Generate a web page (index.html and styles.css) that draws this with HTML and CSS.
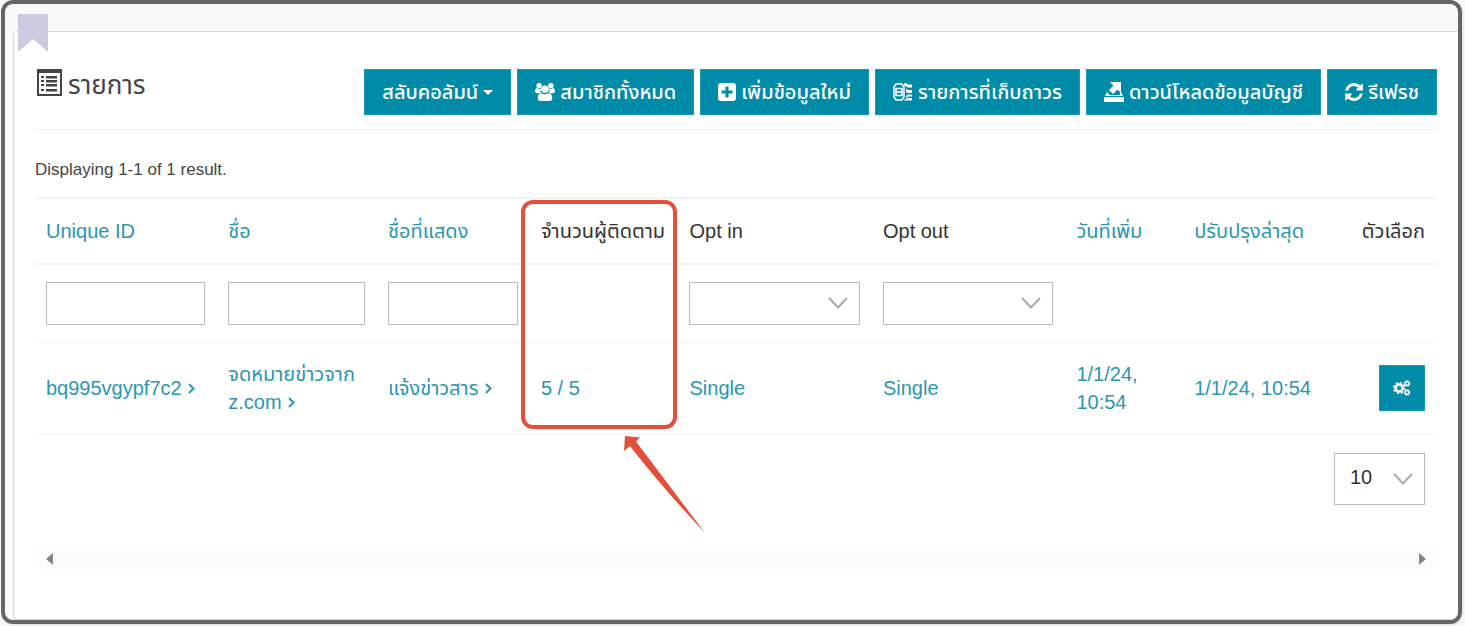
FILE: index.html
```
<!DOCTYPE html>
<html lang="th">
<head>
<meta charset="utf-8">
<title>รายการ</title>
<link rel="stylesheet" href="styles.css">
</head>
<body>
<main class="frame">
  <section class="panel">
    <svg class="bookmark" viewBox="0 0 30 38" aria-hidden="true"><path d="M0 0h30v38L15 25 0 38z"/></svg>
    <header class="panel-header">
      <h1 class="title">
        <svg class="title-icon" viewBox="0 0 25 27" aria-hidden="true"><path fill-rule="evenodd" d="M0 0h25v27H0zM2 4v21h21V4z"/><path d="M4 7h3v2H4zM9 7h11v2.500H9zM4 11h3v2H4zM9 11h11v2.500H9zM4 15h3v2H4zM9 15h11v2.500H9zM4 20h3v2H4zM9 20h11v2.500H9z"/></svg>
        <span>รายการ</span>
      </h1>
      <div class="actions">
        <button class="btn" type="button"><span>สลับคอลัมน์</span><svg class="caret" viewBox="0 0 10 5" aria-hidden="true"><path d="M0 0h10L5 5z"/></svg></button>
        <button class="btn" type="button"><svg class="icon icon-wide" viewBox="0 0 22 20" aria-hidden="true"><circle cx="4.500" cy="3" r="3"/><circle cx="17.500" cy="3" r="3"/><path d="M0 9q0-3 2-3.500 3 2 5 .5-2 3-.5 5.500H2Q0 11.500 0 9zM22 9q0-3-2-3.500-3 2-5 .5 2 3 .5 5.500H20q2 0 2-2.500z"/><circle cx="11" cy="7" r="4.200"/><path d="M6.500 11q4.500 3 9 0 3.500 1 3.500 6 0 3-3 3H6q-3 0-3-3 0-5 3.500-6z"/></svg><span>สมาชิกทั้งหมด</span></button>
        <button class="btn" type="button"><svg class="icon" viewBox="0 0 18 18" aria-hidden="true"><path fill-rule="evenodd" d="M3 0h12q3 0 3 3v12q0 3-3 3H3q-3 0-3-3V3q0-3 3-3zM7.500 3.500v4h-4v3h4v4h3v-4h4v-3h-4v-4z"/></svg><span>เพิ่มข้อมูลใหม่</span></button>
        <button class="btn" type="button"><svg class="icon icon-wide" viewBox="0 0 20 20" aria-hidden="true"><path d="M1 5l2-3h6l2 3v10l-2 3H3l-2-3zM3 6.500h6v7H3zM3 10h6" fill="none" stroke="currentColor" stroke-width="1.500"/><path d="M11 1h2l2 1.500h4v3h-4l-4-2zM13 6.500l2 1.500h4v3h-5l-1-1zM13 14l2-1.500h4v2h-4l-2 2zM11 18l4-2h4v2.500h-8z"/></svg><span>รายการที่เก็บถาวร</span></button>
        <button class="btn" type="button"><svg class="icon icon-wide" viewBox="0 0 20 20" aria-hidden="true"><path d="M6 0h11v11l-3.500-3.500L9 12 5 8l4.500-4.500zM3 10l3 3h10v-2l1-1 2 4H1zM0 15h20v5H0z"/></svg><span>ดาวน์โหลดข้อมูลบัญชี</span></button>
        <button class="btn" type="button"><svg class="icon" viewBox="0 128 1536 1536" aria-hidden="true"><path d="M1511 1056q0 5-1 7-64 268-268 434.500t-478 166.500q-146 0-282.500-55t-243.500-157l-129 129q-19 19-45 19t-45-19-19-45v-448q0-26 19-45t45-19h448q26 0 45 19t19 45-19 45l-137 137q71 66 161 102t187 36q134 0 250-65t186-179q11-17 53-117 8-23 30-23h192q13 0 22.500 9.500t9.500 22.500zm25-800v448q0 26-19 45t-45 19h-448q-26 0-45-19t-19-45 19-45l138-138q-148-137-349-137-134 0-250 65t-186 179q-11 17-53 117-8 23-30 23h-199q-13 0-22.500-9.500t-9.500-22.500v-7q65-268 270-434.500t480-166.500q146 0 284 55.500t245 156.500l130-129q19-19 45-19t45 19 19 45z"/></svg><span>รีเฟรช</span></button>
      </div>
    </header>
    <p class="summary">Displaying 1-1 of 1 result.</p>
    <table class="grid">
      <colgroup><col class="c-id"><col class="c-name"><col class="c-display"><col class="c-count"><col class="c-opt"><col class="c-opt"><col class="c-added"><col class="c-updated"><col class="c-options"></colgroup>
      <thead>
        <tr class="headings">
          <th><a href="#">Unique ID</a></th>
          <th><a href="#">ชื่อ</a></th>
          <th><a href="#">ชื่อที่แสดง</a></th>
          <th class="marked">จำนวนผู้ติดตาม
            <span class="highlight"></span>
            <svg class="arrow" viewBox="0 0 81 97" aria-hidden="true"><path d="M1 0 16 1.500 12 5.500 81 97Q36 49 6 10L0 15z"/></svg>
          </th>
          <th>Opt in</th>
          <th>Opt out</th>
          <th><a href="#">วันที่เพิ่ม</a></th>
          <th><a href="#">ปรับปรุงล่าสุด</a></th>
          <th class="end">ตัวเลือก</th>
        </tr>
        <tr class="filters">
          <td><input class="field" type="text" aria-label="Unique ID"></td>
          <td><input class="field" type="text" aria-label="ชื่อ"></td>
          <td><input class="field" type="text" aria-label="ชื่อที่แสดง"></td>
          <td></td>
          <td><span class="select"><select class="field" aria-label="Opt in"><option></option><option>Single</option></select><svg class="chevron" viewBox="0 0 20 12" aria-hidden="true"><path d="M1 1l9 9.500L19 1"/></svg></span></td>
          <td><span class="select"><select class="field" aria-label="Opt out"><option></option><option>Single</option></select><svg class="chevron" viewBox="0 0 20 12" aria-hidden="true"><path d="M1 1l9 9.500L19 1"/></svg></span></td>
          <td></td><td></td><td></td>
        </tr>
      </thead>
      <tbody>
        <tr class="row">
          <td><a href="#">bq995vgypf7c2 <svg class="more" viewBox="0 0 8 12" aria-hidden="true"><path d="M2 1l4.500 4.500L2 10"/></svg></a></td>
          <td><a href="#">จดหมายข่าวจาก z.com <svg class="more" viewBox="0 0 8 12" aria-hidden="true"><path d="M2 1l4.500 4.500L2 10"/></svg></a></td>
          <td><a href="#">แจ้งข่าวสาร <svg class="more" viewBox="0 0 8 12" aria-hidden="true"><path d="M2 1l4.500 4.500L2 10"/></svg></a></td>
          <td>5 / 5</td>
          <td>Single</td>
          <td>Single</td>
          <td>1/1/24, 10:54</td>
          <td>1/1/24, 10:54</td>
          <td class="end"><button class="btn btn-square" type="button" aria-label="ตัวเลือก"><svg class="icon" viewBox="0 0 19 17" aria-hidden="true"><g fill="none" stroke="currentColor"><circle cx="6.500" cy="8.500" r="3.700" stroke-width="2.800"/><circle cx="6.500" cy="8.500" r="5.700" stroke-width="1.600" stroke-dasharray="2.200 2.280"/><circle cx="14.800" cy="3.800" r="2" stroke-width="1.700"/><circle cx="14.800" cy="3.800" r="3.200" stroke-width="1" stroke-dasharray="1.200 1.310"/><circle cx="14.800" cy="13.200" r="2" stroke-width="1.700"/><circle cx="14.800" cy="13.200" r="3.200" stroke-width="1" stroke-dasharray="1.200 1.310"/></g></svg></button></td>
        </tr>
      </tbody>
    </table>
    <div class="pager"><span class="select"><select class="field field-tall" aria-label="Page size"><option>10</option><option>20</option></select><svg class="chevron" viewBox="0 0 20 12" aria-hidden="true"><path d="M1 1l9 9.500L19 1"/></svg></span></div>
    <div class="scrollbar" aria-hidden="true">
      <svg class="tri" viewBox="0 0 7 12"><path d="M7 0v12L0 6z"/></svg>
      <svg class="tri" viewBox="0 0 7 12"><path d="M0 0v12l7-6z"/></svg>
    </div>
  </section>
</main>
</body>
</html>
```
FILE: styles.css
```
* { box-sizing: border-box; }
body {
  margin: 0;
  background: #fafafa;
  color: #333;
  font: 20px/28px "Liberation Sans", Arial, "Noto Sans Thai", "Noto Sans", sans-serif;
}
a { color: inherit; text-decoration: none; }
svg { fill: currentColor; }
.frame {
  display: flex;
  min-height: calc(100vh - 2px);
  margin: 0 3px 2px 1px;
  padding: 27px 0 0 8px;
  border: 4px solid #666;
  border-radius: 12px;
  background: #fafafa;
  box-shadow: 1px 1px 2px #ddd;
}
.panel {
  position: relative;
  flex: 1;
  padding: 37px 21px 48px;
  border: 1px solid #d3d7df;
  border-right: 0;
  border-radius: 4px 0 8px 4px;
  background: #fff;
}
.bookmark { position: absolute; top: -18px; left: 4px; width: 30px; height: 38px; color: #cccce0; }
.panel-header {
  display: flex;
  justify-content: space-between;
  padding-bottom: 14px;
  border-bottom: 1px solid #eee;
}
.title { display: flex; gap: 6px; margin: 0; color: #444; font-size: 26px; font-weight: 400; line-height: 32px; }
.title-icon { width: 25px; height: 27px; margin-left: 2px; }
.actions { display: flex; gap: 6px; }
.btn {
  display: flex;
  align-items: center;
  justify-content: center;
  gap: 5px;
  height: 46px;
  padding: 0 17px;
  border: 1px solid #1c98b3;
  background: #008ba8;
  color: #fff;
  font: inherit;
  font-weight: 500;
  white-space: nowrap;
}
.icon { width: 18px; height: 18px; }
.icon-wide { width: 20px; height: 20px; }
.caret { width: 10px; height: 5px; }
.btn-square { width: 46px; margin-left: auto; padding: 0; }
.summary { margin: 26px 0 13px; color: #444; font-size: 17px; }
.grid { width: 100%; border-collapse: collapse; table-layout: fixed; }
.c-id { width: 13%; }
.c-name { width: 11.400%; }
.c-display { width: 10.900%; }
.c-count { width: 10.600%; }
.c-opt { width: 13.800%; }
.c-added { width: 8.400%; }
.c-updated { width: 10.100%; }
.c-options { width: 8%; }
th, td { padding: 0 12px 0 11px; text-align: left; vertical-align: middle; font-weight: 400; }
.headings { height: 66px; border: solid #f3f3f3; border-width: 2px 0; white-space: nowrap; }
.headings a, .row { color: #2a97b1; }
.filters { height: 78px; }
.row { height: 92px; border: solid #f3f3f3; border-width: 1px 0; }
.end { text-align: right; }
.marked { position: relative; }
.highlight {
  position: absolute;
  top: 1px;
  right: 1px;
  left: -9px;
  height: 229px;
  border: 4px solid #e44f3c;
  border-radius: 12px;
}
.arrow { position: absolute; top: 237px; left: 94px; width: 81px; height: 97px; color: #e44f3c; }
.field {
  display: block;
  width: 100%;
  height: 43px;
  padding: 0 15px;
  border: 1px solid #bbb;
  border-radius: 0;
  background: #fff;
  color: #333;
  font: inherit;
  appearance: none;
}
.select { position: relative; display: block; }
.chevron {
  position: absolute;
  top: 50%;
  right: 12px;
  width: 20px;
  height: 12px;
  margin-top: -6px;
  fill: none;
  stroke: #aaa;
  stroke-width: 2px;
  pointer-events: none;
}
.more { width: 8px; height: 12px; fill: none; stroke: currentColor; stroke-width: 2px; }
.pager { display: flex; justify-content: flex-end; padding: 18px 12px 44px; }
.field-tall { width: 91px; height: 52px; padding-bottom: 4px; }
.scrollbar { display: flex; justify-content: space-between; align-items: center; height: 20px; padding: 0 11px; background: #fcfcfc; }
.tri { width: 7px; height: 12px; color: #858585; }
```
